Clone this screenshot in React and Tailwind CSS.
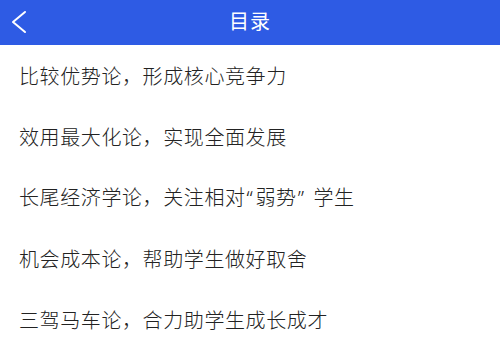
import React from 'react';

const Q = ({ children, className }) => (
  <span style={{ fontFamily: '"Noto Sans", sans-serif' }} className={`font-light ${className}`}>{children}</span>
);

const items = [
  '比较优势论，形成核心竞争力',
  '效用最大化论，实现全面发展',
  <>长尾经济学论，关注相对<Q className="pl-[1px] pr-[2px]">“</Q>弱势<Q className="pl-[1px] pr-[9px]">”</Q>学生</>,
  '机会成本论，帮助学生做好取舍',
  '三驾马车论，合力助学生成长成才',
];

function App() {
  return (
    <div
      className="w-[500px] h-[356px] bg-white overflow-hidden"
      style={{ fontFamily: '"Noto Sans CJK SC", "Noto Sans", sans-serif' }}
    >
      <header className="relative h-[45px] bg-[#2e5be4] flex items-center justify-center">
        <button className="absolute left-[10px] top-[10px] w-[18px] h-[24px]">
          <svg width="18" height="24" viewBox="0 0 18 24" fill="none">
            <path d="M15 2 L3 12 L15 22" stroke="white" strokeWidth="2" strokeLinecap="round" strokeLinejoin="round" />
          </svg>
        </button>
        <h1 className="text-white text-[20px] leading-none -mt-[4px] tracking-[1px]">目录</h1>
      </header>
      <ul>
        {items.map((t, i) => (
          <li key={i} className="h-[61px] flex items-center pl-[19px] text-[20px] leading-none font-light text-[#222222] tracking-[0.6px]">
            <span>{t}</span>
          </li>
        ))}
      </ul>
    </div>
  );
}

export default App;
